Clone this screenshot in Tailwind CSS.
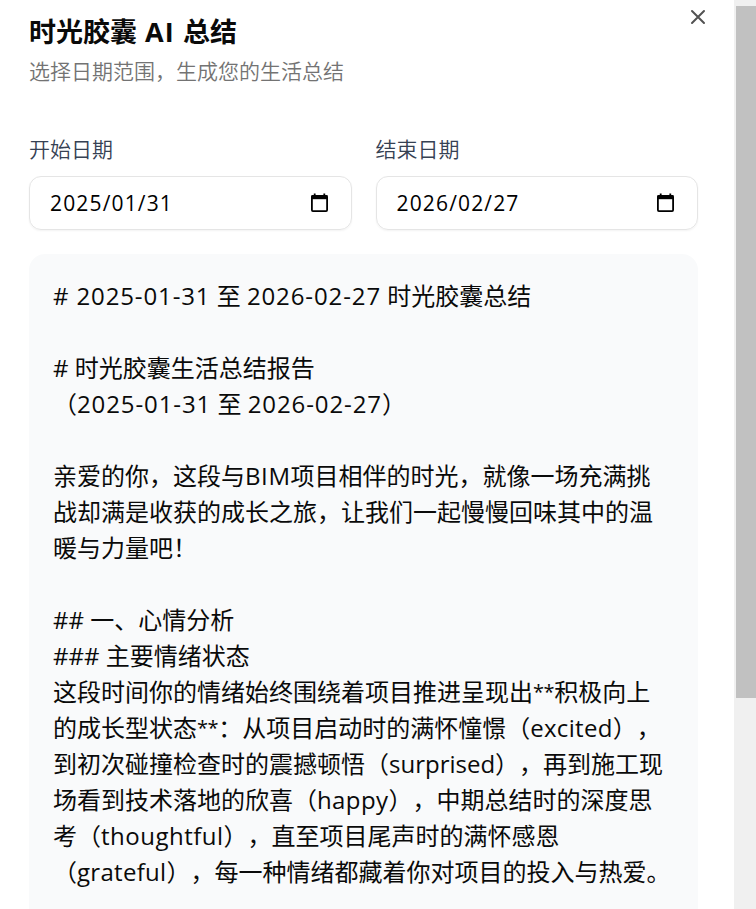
<!DOCTYPE html>
<html lang="zh-CN">
<head>
  <meta charset="UTF-8">
  <meta name="viewport" content="width=device-width, initial-scale=1.0">
  <title>时光胶囊 AI 总结</title>
  <script src="https://cdn.jsdelivr.net/npm/@tailwindcss/browser@4"></script>
</head>
<body class="flex h-screen overflow-hidden bg-white text-neutral-950 font-['Open_Sans','Noto_Sans_CJK_SC',sans-serif] [text-spacing-trim:space-all]">
  <main class="relative flex flex-1 flex-col pl-[29px] pr-9">
    <header class="pt-[18px]">
      <h1 class="h-7 text-[27px] leading-7 font-bold whitespace-nowrap">时光胶囊<span class="tracking-[1.1px]"> AI </span>总结</h1>
      <p class="mt-[9px] h-8 text-[21px] leading-8 font-[350] text-neutral-500">选择日期范围，生成您的生活总结</p>
    </header>
    <button class="absolute top-[5px] right-6 flex size-6 items-center justify-center text-neutral-600" aria-label="关闭">
      <svg class="size-6" viewBox="0 0 24 24" fill="none" stroke="currentColor" stroke-width="2" stroke-linecap="round"><path d="M18 6 6 18M6 6l12 12"/></svg>
    </button>

    <section class="mt-[47px] grid grid-cols-2 gap-6">
      <div>
        <label class="block h-[30px] text-[21px] leading-[30px] font-[350] text-gray-700">开始日期</label>
        <div class="mt-3 flex h-[54px] items-center justify-between rounded-xl border border-neutral-200 pl-5 pr-[22px] shadow-xs">
          <span class="pt-0.5 text-[21px] tracking-[1.15px] text-black">2025/01/31</span>
          <svg class="h-5 w-[19px]" viewBox="0 0 19 20" fill="none" stroke="#000"><rect x="1.9" y="2.9" width="15.2" height="15.2" rx="1" stroke-width="1.8"/><path d="M1.5 4.2h16" stroke-width="4"/><path d="M4.7.6v2M14.3.6v2" stroke-width="1.8"/></svg>
        </div>
      </div>
      <div>
        <label class="block h-[30px] text-[21px] leading-[30px] font-[350] text-gray-700">结束日期</label>
        <div class="mt-3 flex h-[54px] items-center justify-between rounded-xl border border-neutral-200 pl-5 pr-[22px] shadow-xs">
          <span class="pt-0.5 text-[21px] tracking-[1.15px] text-black">2026/02/27</span>
          <svg class="h-5 w-[19px]" viewBox="0 0 19 20" fill="none" stroke="#000"><rect x="1.9" y="2.9" width="15.2" height="15.2" rx="1" stroke-width="1.8"/><path d="M1.5 4.2h16" stroke-width="4"/><path d="M4.7.6v2M14.3.6v2" stroke-width="1.8"/></svg>
        </div>
      </div>
    </section>

    <article class="mt-6 flex-1 rounded-t-2xl bg-gray-50 p-6 text-2xl leading-9 whitespace-nowrap *:h-9">
      <p><span class="tracking-[0.87px]"># 2025-01-31</span> 至 <span class="tracking-[0.9px]">2026-02-27</span> 时光胶囊总结</p>
      <p></p>
      <p># 时光胶囊生活总结报告</p>
      <p>（<span class="tracking-[0.9px]">2025-01-31</span> 至 <span class="tracking-[0.9px]">2026-02-27</span>）</p>
      <p></p>
      <p>亲爱的你，这段与<span class="tracking-[0.6px]">BIM</span>项目相伴的时光，就像一场充满挑</p>
      <p>战却满是收获的成长之旅，让我们一起慢慢回味其中的温</p>
      <p>暖与力量吧！</p>
      <p></p>
      <p>## 一、心情分析</p>
      <p>### 主要情绪状态</p>
      <p>这段时间你的情绪始终围绕着项目推进呈现出<span class="align-[2px] text-[20px] leading-none tracking-[-0.4px]">**</span>积极向上</p>
      <p>的成长型状态<span class="align-[2px] text-[20px] leading-none tracking-[-0.4px]">**</span>：从项目启动时的满怀憧憬（<span class="tracking-[0.3px]">excited</span>），</p>
      <p>到初次碰撞检查时的震撼顿悟（surprised），再到施工现</p>
      <p>场看到技术落地的欣喜（<span class="tracking-[0.4px]">happy</span>），中期总结时的深度思</p>
      <p>考（<span class="tracking-[0.5px]">thoughtful</span>），直至项目尾声时的满怀感恩</p>
      <p>（<span class="tracking-[0.3px]">grateful</span>），每一种情绪都藏着你对项目的投入与热爱。</p>
    </article>
  </main>

  <!-- scrollbar -->
  <aside class="w-[22px] bg-[#f0f0f0] pt-1.5 pl-0.5">
    <div class="h-[692px] bg-[#c1c1c1]"></div>
  </aside>
</body>
</html>
